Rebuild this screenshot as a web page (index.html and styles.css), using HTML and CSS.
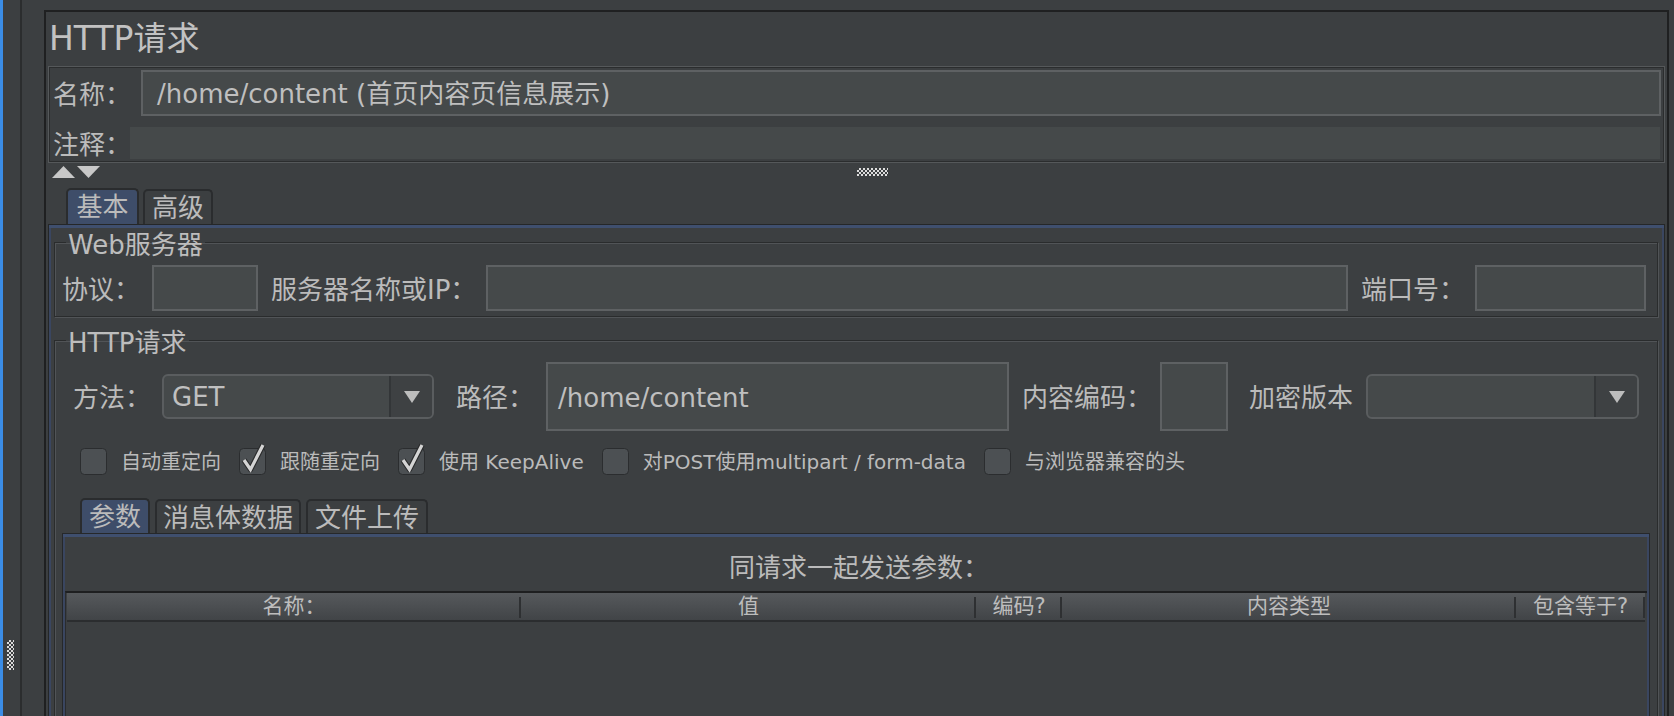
FILE: index.html
```html
<!DOCTYPE html>
<html lang="zh-CN">
<head>
<meta charset="utf-8">
<title>HTTP请求</title>
<link rel="stylesheet" href="styles.css">
</head>
<body>
<div class="sidebar">
  <div class="strip"></div>
  <div class="gripcol"><div class="grip"></div></div>
  <div class="vline"></div>
</div>
<div class="panel">
  <h1 class="title">HTTP请求</h1>
  <div class="namebox">
    <div class="namerow">
      <span class="lbl name-lbl">名称：</span>
      <div class="field name-field">/home/content (首页内容页信息展示)</div>
    </div>
    <div class="commentrow">
      <span class="lbl comment-lbl">注释：</span>
      <div class="comment-field"></div>
    </div>
  </div>
  <div class="splitter">
    <svg class="arrows" width="48" height="12" viewBox="0 0 48 12"><polygon points="0,12 23,12 11.5,0" fill="#c8c8c8"/><polygon points="25,0 48,0 36.5,12" fill="#c8c8c8"/></svg>
    <div class="dots"></div>
  </div>
  <div class="tabs">
    <div class="tab active">基本</div>
    <div class="tab">高级</div>
  </div>
  <div class="tabpanel">
    <fieldset class="group web">
      <legend>Web服务器</legend>
      <div class="row">
        <span class="lbl">协议：</span>
        <div class="field proto"></div>
        <span class="lbl server-lbl">服务器名称或IP：</span>
        <div class="field server"></div>
        <span class="lbl port-lbl">端口号：</span>
        <div class="field port"></div>
      </div>
    </fieldset>
    <fieldset class="group http">
      <legend>HTTP请求</legend>
      <div class="row reqrow">
        <span class="lbl">方法：</span>
        <div class="combo method">
          <span class="combo-val">GET</span>
          <span class="combo-btn"><svg width="16" height="12" viewBox="0 0 16 12"><polygon points="0,0 16,0 8,12" fill="#bdbdbd"/></svg></span>
        </div>
        <span class="lbl path-lbl">路径：</span>
        <div class="field tall path">/home/content</div>
        <span class="lbl enc-lbl">内容编码：</span>
        <div class="field tall enc"></div>
        <span class="lbl ver-lbl">加密版本</span>
        <div class="combo version">
          <span class="combo-val"></span>
          <span class="combo-btn"><svg width="16" height="12" viewBox="0 0 16 12"><polygon points="0,0 16,0 8,12" fill="#bdbdbd"/></svg></span>
        </div>
      </div>
      <div class="checks">
        <label class="chk">
          <svg width="28" height="33" viewBox="0 0 28 33"><rect x="0.5" y="5.5" width="26" height="26" rx="4" fill="#4c5053" stroke="#2b2d2f"/></svg>
          <span>自动重定向</span>
        </label>
        <label class="chk">
          <svg width="28" height="33" viewBox="0 0 28 33"><rect x="0.5" y="5.5" width="26" height="26" rx="4" fill="#4c5053" stroke="#2b2d2f"/><path d="M5 17 L11.5 26.5 L24 2" fill="none" stroke="#2a2b2c" stroke-width="5.5" stroke-linejoin="round"/><path d="M5 17 L11.5 26.5 L24 2" fill="none" stroke="#d4d4d4" stroke-width="3.2"/></svg>
          <span>跟随重定向</span>
        </label>
        <label class="chk">
          <svg width="28" height="33" viewBox="0 0 28 33"><rect x="0.5" y="5.5" width="26" height="26" rx="4" fill="#4c5053" stroke="#2b2d2f"/><path d="M5 17 L11.5 26.5 L24 2" fill="none" stroke="#2a2b2c" stroke-width="5.5" stroke-linejoin="round"/><path d="M5 17 L11.5 26.5 L24 2" fill="none" stroke="#d4d4d4" stroke-width="3.2"/></svg>
          <span>使用 KeepAlive</span>
        </label>
        <label class="chk">
          <svg width="28" height="33" viewBox="0 0 28 33"><rect x="0.5" y="5.5" width="26" height="26" rx="4" fill="#4c5053" stroke="#2b2d2f"/></svg>
          <span>对POST使用multipart / form-data</span>
        </label>
        <label class="chk">
          <svg width="28" height="33" viewBox="0 0 28 33"><rect x="0.5" y="5.5" width="26" height="26" rx="4" fill="#4c5053" stroke="#2b2d2f"/></svg>
          <span>与浏览器兼容的头</span>
        </label>
      </div>
      <div class="subtabs">
        <div class="tab active">参数</div>
        <div class="tab">消息体数据</div>
        <div class="tab">文件上传</div>
      </div>
      <div class="subpanel">
        <div class="caption">同请求一起发送参数：</div>
        <div class="table">
          <div class="thead">
            <div class="th c1">名称：</div>
            <div class="th c2">值</div>
            <div class="th c3">编码?</div>
            <div class="th c4">内容类型</div>
            <div class="th c5">包含等于?</div>
          </div>
          <div class="tbody"></div>
        </div>
      </div>
    </fieldset>
  </div>
</div>
</body>
</html>
```
FILE: styles.css
```css
* { box-sizing: border-box; }

html, body {
  margin: 0;
  height: 716px;
  overflow: hidden;
}

body {
  display: flex;
  background: #3c3f41;
  color: #bbbbbb;
  font-family: "DejaVu Sans", "Noto Sans CJK SC", sans-serif;
  font-size: 26px;
}

/* ---------- left strip ---------- */
.sidebar {
  width: 44px;
  flex: none;
  display: flex;
}
.strip {
  width: 3px;
  background: #3b8de6;
}
.gripcol {
  width: 17px;
  padding: 640px 0 0 4px;
}
.grip {
  width: 7px;
  height: 30px;
  background: repeating-conic-gradient(#dcdcdc 0 25%, #3c3f41 0 50%) 0 0 / 4px 4px;
}
.vline {
  width: 2px;
  background: #2b2d2e;
}

/* ---------- main panel ---------- */
.panel {
  flex: 1;
  margin: 10px 5px 0 0;
  border: 2px solid #1f2021;
  border-bottom: none;
  display: flex;
  flex-direction: column;
  min-width: 0;
}

.title {
  margin: 0;
  height: 54px;
  padding: 2px 0 0 3px;
  font-size: 33px;
  font-weight: normal;
  line-height: 50px;
  color: #c2c2c2;
}

.lbl {
  flex: none;
  white-space: nowrap;
  line-height: 30px;
}

.field {
  background: #45494a;
  border: 2px solid #5e6163;
  color: #bfbfbf;
  white-space: nowrap;
}

/* name / comment box */
.namebox {
  margin: 0 2px;
  height: 97px;
  border: 1px solid #55585a;
  box-shadow: inset 0 0 0 1px #2b2d2e;
  padding: 3px 3px 3px 4px;
}
.namerow {
  display: flex;
  align-items: center;
  height: 46px;
}
.name-lbl { width: 88px; padding-top: 4px; }
.name-field {
  flex: 1;
  height: 46px;
  padding: 3px 0 0 14px;
  line-height: 39px;
}
.commentrow {
  display: flex;
  align-items: center;
  margin-top: 11px;
  height: 32px;
}
.comment-lbl { width: 77px; padding-top: 4px; }
.comment-field {
  flex: 1;
  height: 32px;
  background: #45494a;
  margin-right: 1px;
}

/* splitter */
.splitter {
  height: 25px;
  display: flex;
  align-items: flex-start;
  padding-left: 6px;
}
.arrows {
  margin-top: 3px;
  flex: none;
}
.dots {
  margin: 5px 0 0 757px;
  width: 31px;
  height: 8px;
  background: repeating-conic-gradient(#dcdcdc 0 25%, #3c3f41 0 50%) 0 0 / 4px 4px;
}

/* tabs */
.tabs, .subtabs {
  display: flex;
  align-items: flex-end;
  gap: 4px;
}
.tabs {
  height: 36px;
  padding-left: 20px;
}
.tab {
  height: 35px;
  padding: 1px 7px 0;
  border: 2px solid #2a2c2e;
  border-bottom: none;
  border-radius: 5px 5px 0 0;
  line-height: 32px;
  white-space: nowrap;
  color: #bbbbbb;
}
.tab.active {
  height: 36px;
  padding: 1px 8.5px 0;
  background: #3e4d69;
}

.tabpanel {
  flex: 1;
  margin: 0 2px;
  border: 1px solid #252728;
  border-bottom: none;
  box-shadow: inset 0 3px 0 #3f4f6e, inset 2px 0 0 #3a4660, inset -2px 0 0 #3a4660;
  padding: 2px 6px 0 5px;
  display: flex;
  flex-direction: column;
  min-height: 0;
}

/* titled group boxes */
.group {
  margin: 0;
  border: 1px solid #2a2c2d;
  box-shadow: inset 1px 1px 0 #515457, 1px 1px 0 #515457;
  min-width: 0;
}
.group legend {
  margin-left: 4px;
  padding: 6px 2px 0;
  line-height: 24px;
  font-size: 26px;
  color: #bdbdbd;
}
.row {
  display: flex;
  align-items: center;
}
.row .lbl { padding-top: 3px; }

.web {
  padding: 8px 11px 5px 7px;
}
.web .field { height: 46px; }
.proto { width: 106px; margin-left: 12px; }
.server-lbl { margin-left: 13px; }
.server { flex: 1; margin-left: 10px; }
.port-lbl { margin-left: 13px; }
.port { width: 171px; margin-left: 10px; }

.http {
  margin-top: 8px;
  flex: 1;
  padding: 7px 7px 0 7px;
  border-bottom: none;
  display: flex;
  flex-direction: column;
  min-height: 0;
}
.reqrow {
  height: 69px;
  padding: 0 11px 0 11px;
}
.tall {
  height: 69px;
}
.path {
  width: 463px;
  margin-left: 12px;
  padding: 3px 0 0 10px;
  line-height: 62px;
}
.path-lbl { margin-left: 22px; }
.enc-lbl { margin-left: 13px; }
.enc { width: 68px; margin-left: 8px; }
.ver-lbl { margin-left: 21px; }

.combo {
  height: 45px;
  display: flex;
  border: 2px solid #5a5d5f;
  border-radius: 6px;
  background: #45494a;
  overflow: hidden;
}
.method { width: 272px; margin-left: 11px; }
.version { width: 273px; margin-left: 13px; }
.combo-val {
  flex: 1;
  padding: 2px 0 0 8px;
  line-height: 39px;
  color: #c0c0c0;
}
.combo-btn {
  width: 43px;
  border-left: 2px solid #333638;
  background: #3e4143;
  display: flex;
  align-items: center;
  justify-content: center;
}

/* checkboxes */
.checks {
  display: flex;
  align-items: flex-end;
  gap: 18px;
  margin-top: 12px;
  padding-left: 18px;
  font-size: 20px;
}
.chk {
  display: flex;
  align-items: flex-end;
  gap: 13px;
  white-space: nowrap;
}
.chk svg { flex: none; }
.chk span { line-height: 28px; }

/* sub tabs */
.subtabs {
  margin-top: 22px;
  padding-left: 18px;
  height: 35px;
  gap: 5px;
}
.subtabs .tab { height: 34px; padding: 1px 7px 0; line-height: 32px; }
.subtabs .tab.active { height: 35px; padding: 1px 7px 0; }
.subtabs .tab:nth-child(2) { padding: 1px 6px 0; }

.subpanel {
  flex: 1;
  border: 1px solid #26282a;
  border-bottom: none;
  box-shadow: inset 0 3px 0 #3f4f6e, inset 2px 0 0 #3a4660, inset -2px 0 0 #3a4660;
  padding: 4px 2px 0 2px;
  display: flex;
  flex-direction: column;
}
.caption {
  height: 53px;
  text-align: center;
  padding: 5px 0 0 6px;
  line-height: 50px;
}
.table {
  flex: 1;
  border-top: 2px solid #1e1f20;
  border-left: 1px solid #2a2c2e;
  display: flex;
  flex-direction: column;
}
.thead {
  display: flex;
  height: 29px;
  margin-left: 1px;
  margin-right: 2px;
  background: linear-gradient(#56595c, #414447);
  border-bottom: 2px solid #2b2d2f;
  font-size: 21px;
}
.th {
  text-align: center;
  line-height: 27px;
  color: #bdbdbd;
  background: linear-gradient(#2e3032, #2e3032) right 4px / 2px 21px no-repeat;
}
.c1 { width: 454px; }
.c2 { width: 455px; }
.c3 { width: 86px; }
.c4 { width: 454px; }
.c5 { flex: 1; }
.tbody { flex: 1; }
```
